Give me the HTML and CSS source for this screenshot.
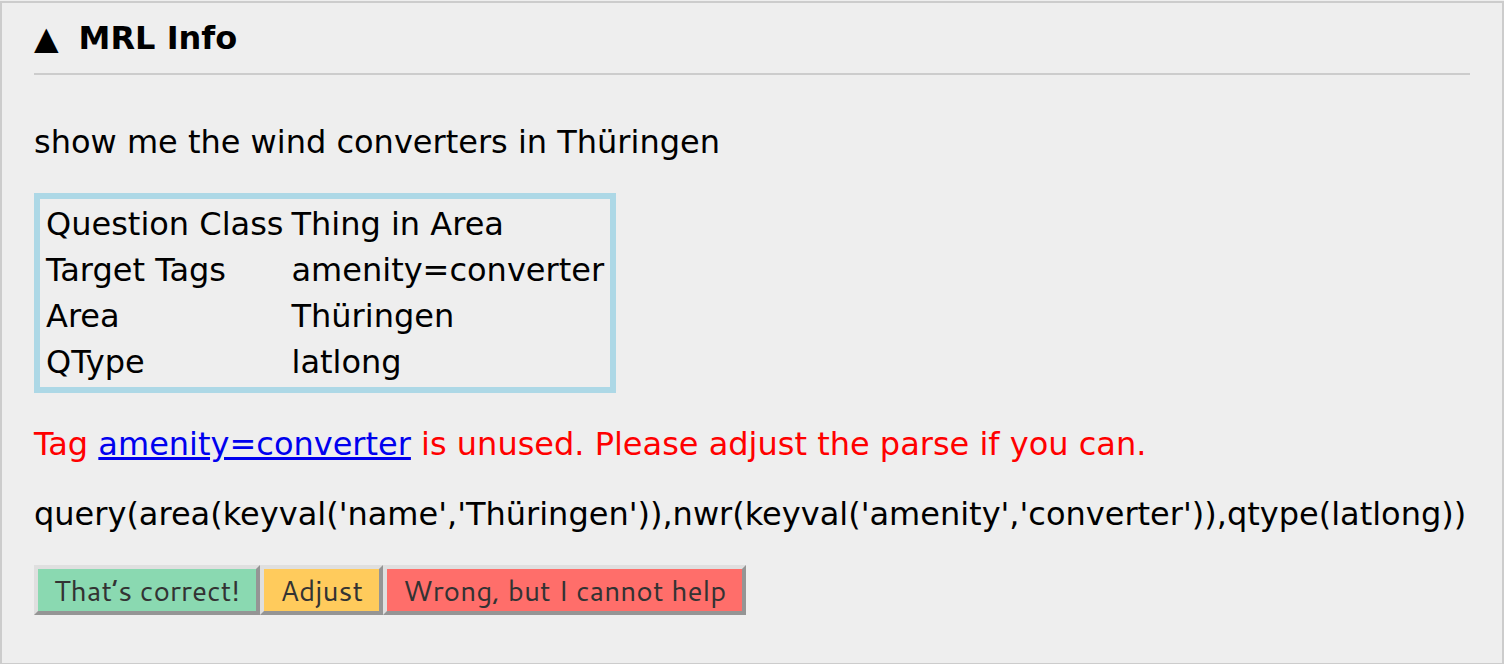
FILE: index.html
```html
<!DOCTYPE html>
<html lang="en">
<head>
<meta charset="utf-8">
<title>MRL Info</title>
<link rel="stylesheet" href="styles.css">
</head>
<body>
<section class="panel">
  <h2 class="panel-title"><button class="toggle" type="button"><span class="arrow" aria-hidden="true">▲</span>MRL Info</button></h2>
  <p class="text">show me the wind converters in Thüringen</p>
  <table class="parse">
    <tbody>
      <tr><th scope="row">Question Class</th><td>Thing in Area</td></tr>
      <tr><th scope="row">Target Tags</th><td>amenity=converter</td></tr>
      <tr><th scope="row">Area</th><td>Thüringen</td></tr>
      <tr><th scope="row">QType</th><td>latlong</td></tr>
    </tbody>
  </table>
  <p class="text warning">Tag <a href="#amenity-converter">amenity=converter</a> is unused. Please adjust the parse if you can.</p>
  <p class="text query">query(area(keyval('name','Thüringen')),nwr(keyval('amenity','converter')),qtype(latlong))</p>
  <div class="actions">
    <button class="action correct" type="button">That’s correct!</button>
    <button class="action adjust" type="button">Adjust</button>
    <button class="action wrong" type="button">Wrong, but I cannot help</button>
  </div>
</section>
</body>
</html>
```

FILE: styles.css
```css
* {
  box-sizing: border-box;
}

body {
  margin: 0;
  background: #eee;
  color: #000;
  font-family: "DejaVu Sans", sans-serif;
  font-size: 32px;
  line-height: 38px;
}

.panel {
  margin-top: 1px;
  padding: 16px 32px 48px;
  border: 2px solid #ccc;
  background: #eee;
}

.panel-title {
  margin: 0 0 48px;
  padding-bottom: 16px;
  border-bottom: 2px solid #ccc;
  font-size: 32px;
}

.toggle {
  display: flex;
  gap: 20px;
  padding: 0;
  border: 0;
  background: none;
  color: inherit;
  font: bold 32px/38px "DejaVu Sans", sans-serif;
}

.text {
  margin: 32px 0;
}

.parse {
  border: 6px solid lightblue;
  border-spacing: 4px;
}

.parse th,
.parse td {
  padding: 2px;
  font-weight: normal;
  text-align: left;
}

.warning {
  color: #f00;
}

.warning a {
  color: #00e;
}

.actions {
  display: flex;
  flex-wrap: wrap;
}

.action {
  padding: 0 16px;
  border: 4px solid;
  border-color: #dfdfdf #959595 #959595 #dfdfdf;
  color: #333;
  font-family: Cantarell, "Open Sans", sans-serif;
  font-size: 28px;
  line-height: 42px;
}

.correct {
  background: #8ad9b1;
}

.adjust {
  background: #ffcb5c;
}

.wrong {
  background: #ff6e6a;
}
```
